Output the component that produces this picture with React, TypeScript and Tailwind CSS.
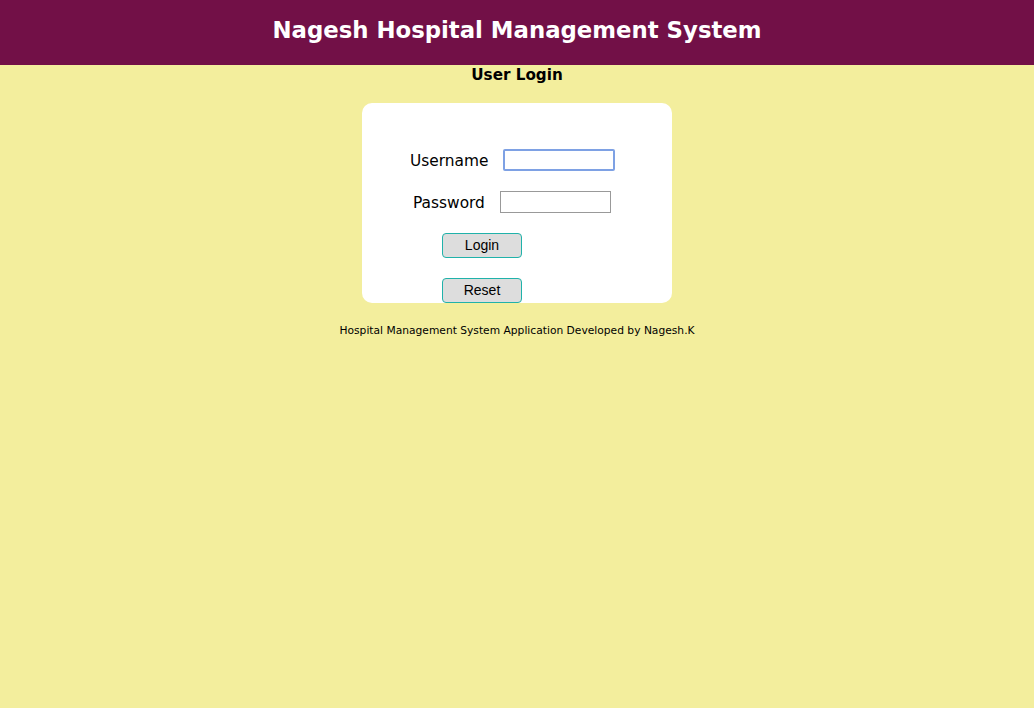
export default function App() {
  return (
    <main className="min-h-[708px] bg-[#f3ee9d] font-['DejaVu_Sans',Verdana,sans-serif] text-black">
      <header className="h-[65px] bg-[#721047] flex items-center justify-center">
        <h1 className="text-[22.8px] font-bold text-white leading-none -mt-[4px]">
          Nagesh Hospital Management System
        </h1>
      </header>

      <h2 className="text-center text-[15.2px] font-bold leading-[19px] pt-[1px]">User Login</h2>

      {/* Login card */}
      <div className="mx-auto mt-[18px] w-[310px] h-[200px] rounded-[10px] bg-white pt-[46px]">
        <div className="flex items-center h-[22px] pl-[48px] gap-[15px]">
          <label htmlFor="username" className="text-[15.4px] pt-[3px]">Username</label>
          <input
            id="username"
            type="text"
            autoFocus
            className="w-[112px] h-[22px] border-2 border-[#7ea1e4] rounded-[2px] bg-white outline-none px-[2px] text-[13px]"
          />
        </div>
        <div className="flex items-center h-[22px] mt-[20px] pl-[51px] gap-[15px]">
          <label htmlFor="password" className="text-[15.4px] pt-[3px]">Password</label>
          <input
            id="password"
            type="password"
            className="w-[111px] h-[22px] border border-[#999999] bg-white outline-none px-[2px]"
          />
        </div>
        <button className="block ml-[80px] mt-[20px] w-[80px] h-[25px] bg-[#dddddd] border border-[#20b2aa] rounded-[4px] font-['Liberation_Sans',Arial,sans-serif] text-[14px]">
          Login
        </button>
        <button className="block ml-[80px] mt-[20px] w-[80px] h-[25px] bg-[#dddddd] border border-[#20b2aa] rounded-[4px] font-['Liberation_Sans',Arial,sans-serif] text-[14px]">
          Reset
        </button>
      </div>

      <p className="text-center text-[10.7px] mt-[20px]">
        Hospital Management System Application Developed by Nagesh.K
      </p>
    </main>
  );
}
